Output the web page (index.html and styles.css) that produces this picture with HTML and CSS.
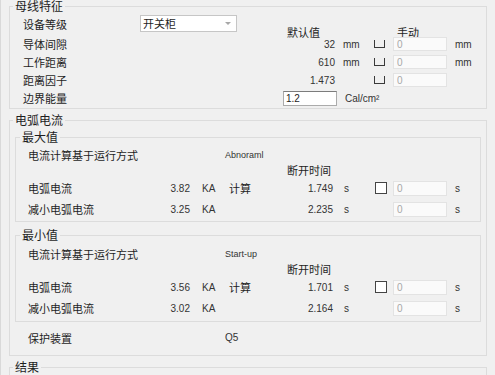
FILE: index.html
```html
<!DOCTYPE html>
<html lang="zh-CN">
<head>
  <meta charset="UTF-8">
  <title>电弧计算</title>
  <link rel="stylesheet" href="styles.css">
</head>
<body>
  <div class="window">
    <fieldset class="group">
      <legend>母线特征</legend>
      <div class="bus">
        <span class="lbl first">设备等级</span>
        <div class="select">开关柜<i class="arrow"></i></div>
        <span class="head col-val">默认值</span>
        <span class="head col-man">手动</span>

        <span class="lbl">导体间隙</span>
        <span class="num">32</span>
        <span class="unit">mm</span>
        <input class="tick" type="checkbox">
        <input class="field" type="text" value="0" disabled>
        <span class="unit2">mm</span>

        <span class="lbl">工作距离</span>
        <span class="num">610</span>
        <span class="unit">mm</span>
        <input class="tick" type="checkbox">
        <input class="field" type="text" value="0" disabled>
        <span class="unit2">mm</span>

        <span class="lbl">距离因子</span>
        <span class="num">1.473</span>
        <input class="tick" type="checkbox">
        <input class="field" type="text" value="0" disabled>

        <span class="lbl">边界能量</span>
        <input class="entry" type="text" value="1.2">
        <span class="unit wide">Cal/cm²</span>
      </div>
    </fieldset>

    <fieldset class="group">
      <legend>电弧电流</legend>

      <fieldset class="sub">
        <legend>最大值</legend>
        <div class="arc">
          <span class="span-lbl">电流计算基于运行方式</span>
          <span class="mode">Abnoraml</span>
          <span class="c-time">断开时间</span>

          <span class="lbl">电弧电流</span>
          <span class="val">3.82</span>
          <span class="ka">KA</span>
          <span class="calc">计算</span>
          <span class="time">1.749</span>
          <span class="sec">s</span>
          <input class="box" type="checkbox">
          <input class="field tall" type="text" value="0" disabled>
          <span class="sec2">s</span>

          <span class="lbl">减小电弧电流</span>
          <span class="val">3.25</span>
          <span class="ka">KA</span>
          <span class="time">2.235</span>
          <span class="sec">s</span>
          <input class="field tall c-in" type="text" value="0" disabled>
          <span class="sec2">s</span>
        </div>
      </fieldset>

      <fieldset class="sub low">
        <legend>最小值</legend>
        <div class="arc">
          <span class="span-lbl">电流计算基于运行方式</span>
          <span class="mode">Start-up</span>
          <span class="c-time">断开时间</span>

          <span class="lbl">电弧电流</span>
          <span class="val">3.56</span>
          <span class="ka">KA</span>
          <span class="calc">计算</span>
          <span class="time">1.701</span>
          <span class="sec">s</span>
          <input class="box" type="checkbox">
          <input class="field tall" type="text" value="0" disabled>
          <span class="sec2">s</span>

          <span class="lbl">减小电弧电流</span>
          <span class="val">3.02</span>
          <span class="ka">KA</span>
          <span class="time">2.164</span>
          <span class="sec">s</span>
          <input class="field tall c-in" type="text" value="0" disabled>
          <span class="sec2">s</span>
        </div>
      </fieldset>

      <div class="guard">
        <span>保护装置</span>
        <span class="q">Q5</span>
      </div>
    </fieldset>

    <fieldset class="group result">
      <legend>结果</legend>
    </fieldset>
  </div>
</body>
</html>
```

FILE: styles.css
```css
html {
  overflow: hidden;
}

body {
  margin: 0;
  background: #f0f0f0;
  font-family: "Noto Sans CJK SC", sans-serif;
  font-size: 11px;
  color: #1e1e1e;
}

.window {
  border-left: 1px solid #d9d9d9;
  padding: 0 8px;
  min-height: 375px;
}

.group {
  margin: 0;
  padding: 0;
  border: 1px solid #dcdcdc;
  min-width: 0;
}

.group + .group {
  margin-top: 5px;
}

.group > legend {
  margin-left: 3px;
  padding: 0 2px;
  font-size: 12px;
  line-height: 12px;
}

.sub {
  margin: 5px 5px 0;
  padding: 0;
  border: 1px solid #dcdcdc;
  min-width: 0;
}

.sub.low {
  margin-top: 7px;
}

.sub > legend {
  margin-left: 4px;
  padding: 0 2px;
  font-size: 12px;
  line-height: 12px;
}

/* 母线特征 */
.bus {
  display: grid;
  grid-template-columns: 117px 97px 46px 54px 37px 19px 54px 1fr;
  grid-template-rows: 20px repeat(4, 18px);
  align-items: center;
  padding: 3px 0 1px 13px;
}

.lbl {
  grid-column: 1;
  line-height: 18px;
}

.lbl.first {
  align-self: start;
}

.select {
  grid-column: 2;
  align-self: start;
  height: 17px;
  box-sizing: border-box;
  border: 1px solid #c6c6c6;
  background: #fff;
  display: flex;
  align-items: center;
  justify-content: space-between;
  padding: 0 5px 0 2px;
  line-height: 15px;
}

.arrow {
  border-left: 3px solid transparent;
  border-right: 3px solid transparent;
  border-top: 3px solid #a8a8a8;
}

.head {
  align-self: end;
  margin-bottom: -3px;
  line-height: 12px;
  padding-left: 4px;
}

.col-val { grid-column: 4; }
.col-man { grid-column: 7; }

.num,
.unit,
.unit2,
.val,
.ka,
.time,
.sec,
.sec2,
.mode,
.q {
  font-family: "Liberation Sans", Arial, sans-serif;
  font-size: 10px;
  color: #333;
}

.num {
  grid-column: 4;
  text-align: right;
  padding-right: 2px;
}

.unit {
  grid-column: 5;
  padding-left: 6px;
}

.unit.wide {
  grid-column: 5 / 9;
  padding-left: 8px;
}

.unit2 {
  grid-column: 8;
  padding-left: 8px;
}

.tick {
  grid-column: 6;
  appearance: none;
  margin: 0;
  width: 11px;
  height: 8px;
  box-sizing: border-box;
  border: 1px solid #3a3a3a;
  border-top: 0;
  background: transparent;
}

.field {
  appearance: none;
  margin: 0;
  width: 54px;
  height: 14px;
  box-sizing: border-box;
  border: 1px solid #e3e3e3;
  background: #fafafa;
  padding: 0 3px;
  font-family: "Liberation Sans", Arial, sans-serif;
  font-size: 10px;
  color: #a8a8a8;
}

.field.tall {
  height: 15px;
}

.entry {
  grid-column: 4;
  margin: 0;
  width: 54px;
  height: 15px;
  box-sizing: border-box;
  border: 1px solid #ababab;
  border-top-color: #7c7c7c;
  background: #fff;
  padding: 0 2px;
  font-family: "Liberation Sans", Arial, sans-serif;
  font-size: 10px;
  color: #1e1e1e;
}

/* 电弧电流 */
.arc {
  display: grid;
  grid-template-columns: 122px 40px 35px 62px 50px 38px 18px 54px 1fr;
  grid-template-rows: 16px 14px 22px 20px;
  align-items: center;
  padding: 4px 0 2px 12px;
}

.low .arc {
  padding: 5px 0 3px 12px;
}

.span-lbl {
  grid-column: 1 / 4;
}

.mode {
  grid-column: 4 / 6;
  font-size: 9px;
}

.c-time {
  grid-column: 5 / 7;
}

.val {
  grid-column: 2;
  text-align: right;
}

.ka {
  grid-column: 3;
  padding-left: 12px;
}

.calc {
  grid-column: 4;
  padding-left: 4px;
}

.time {
  grid-column: 5;
  text-align: right;
  padding-right: 4px;
}

.sec {
  grid-column: 6;
  padding-left: 7px;
}

.box {
  grid-column: 7;
  appearance: none;
  margin: 0;
  width: 12px;
  height: 12px;
  box-sizing: border-box;
  border: 1px solid #444;
  background: #fff;
}

.c-in {
  grid-column: 8;
}

.sec2 {
  grid-column: 9;
  padding-left: 8px;
}

.guard {
  display: grid;
  grid-template-columns: 197px 1fr;
  align-items: center;
  padding: 7px 0 8px 18px;
  line-height: 18px;
}

.result {
  height: 40px;
}
```
